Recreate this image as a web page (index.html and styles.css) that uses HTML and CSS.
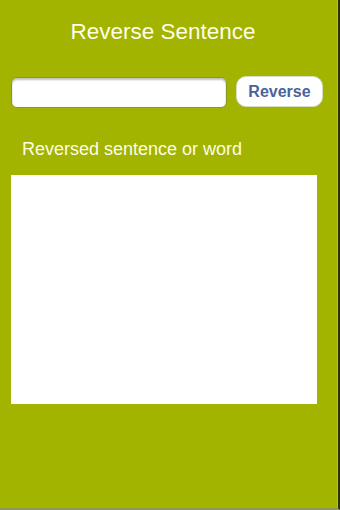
FILE: index.html
```html
<!DOCTYPE html>
<html lang="en">
<head>
    <meta charset="UTF-8">
    <meta name="viewport" content="width=device-width, initial-scale=1.0">
    <title>Reverse Sentence</title>
    <link rel="stylesheet" href="styles.css">
</head>
<body>
    <div class="screen">
        <h1 class="title">Reverse Sentence</h1>

        <div class="input-row">
            <input type="text" id="sentenceInput" class="sentence-input">
            <button id="reverseBtn" class="reverse-btn">Reverse</button>
        </div>

        <p class="result-label">Reversed sentence or word</p>
        <div id="resultBox" class="result-box"></div>
    </div>

    <script>
        const input = document.getElementById('sentenceInput');
        const resultBox = document.getElementById('resultBox');

        document.getElementById('reverseBtn').addEventListener('click', () => {
            // 단어 하나면 글자를 뒤집고, 문장이면 단어 순서를 뒤집는다
            const text = input.value.trim();
            const words = text.split(/\s+/);
            resultBox.textContent = words.length > 1
                ? words.reverse().join(' ')
                : text.split('').reverse().join('');
        });
    </script>
</body>
</html>
```

FILE: styles.css
```css
:root {
    --bg-green: #a2b300;
    --button-text: #4b6399;
}

body {
    margin: 0;
    background-color: var(--bg-green);
    font-family: 'Liberation Sans', Arial, Helvetica, sans-serif;
}

.screen {
    width: 340px;
    height: 510px;
    box-sizing: border-box;
    padding: 18px 0 0 11px;
    background-color: var(--bg-green);
    border-right: 2px solid #2c3300;
    border-bottom: 2px solid #8e9658;
    box-shadow: inset -1px 0 0 #b4c21a;
}

.title {
    margin: 0;
    padding-right: 23px;
    text-align: center;
    color: #fdfde8;
    font-size: 22.5px;
    font-weight: normal;
    line-height: 28px;
}

.input-row {
    display: flex;
    align-items: flex-start;
    gap: 9px;
    margin-top: 30px;
}

.sentence-input {
    width: 216px;
    height: 31px;
    box-sizing: border-box;
    border: 1px solid #8d9626;
    border-radius: 6px;
    background-color: #fff;
    box-shadow: inset 0 2px 2px rgba(0, 0, 0, 0.25);
    margin-top: 1px;
    padding: 0 6px;
    font-size: 15px;
}

.reverse-btn {
    width: 87px;
    height: 31px;
    border: 1px solid #d8dcc0;
    border-radius: 10px;
    background-color: #fff;
    color: var(--button-text);
    font-family: inherit;
    font-size: 16px;
    font-weight: bold;
    cursor: pointer;
}

.result-label {
    margin: 30px 0 0 11px;
    color: #fdfde8;
    font-size: 18px;
    line-height: 22px;
}

.result-box {
    width: 306px;
    height: 229px;
    margin-top: 15px;
    background-color: #fff;
    font-size: 15px;
}
```
